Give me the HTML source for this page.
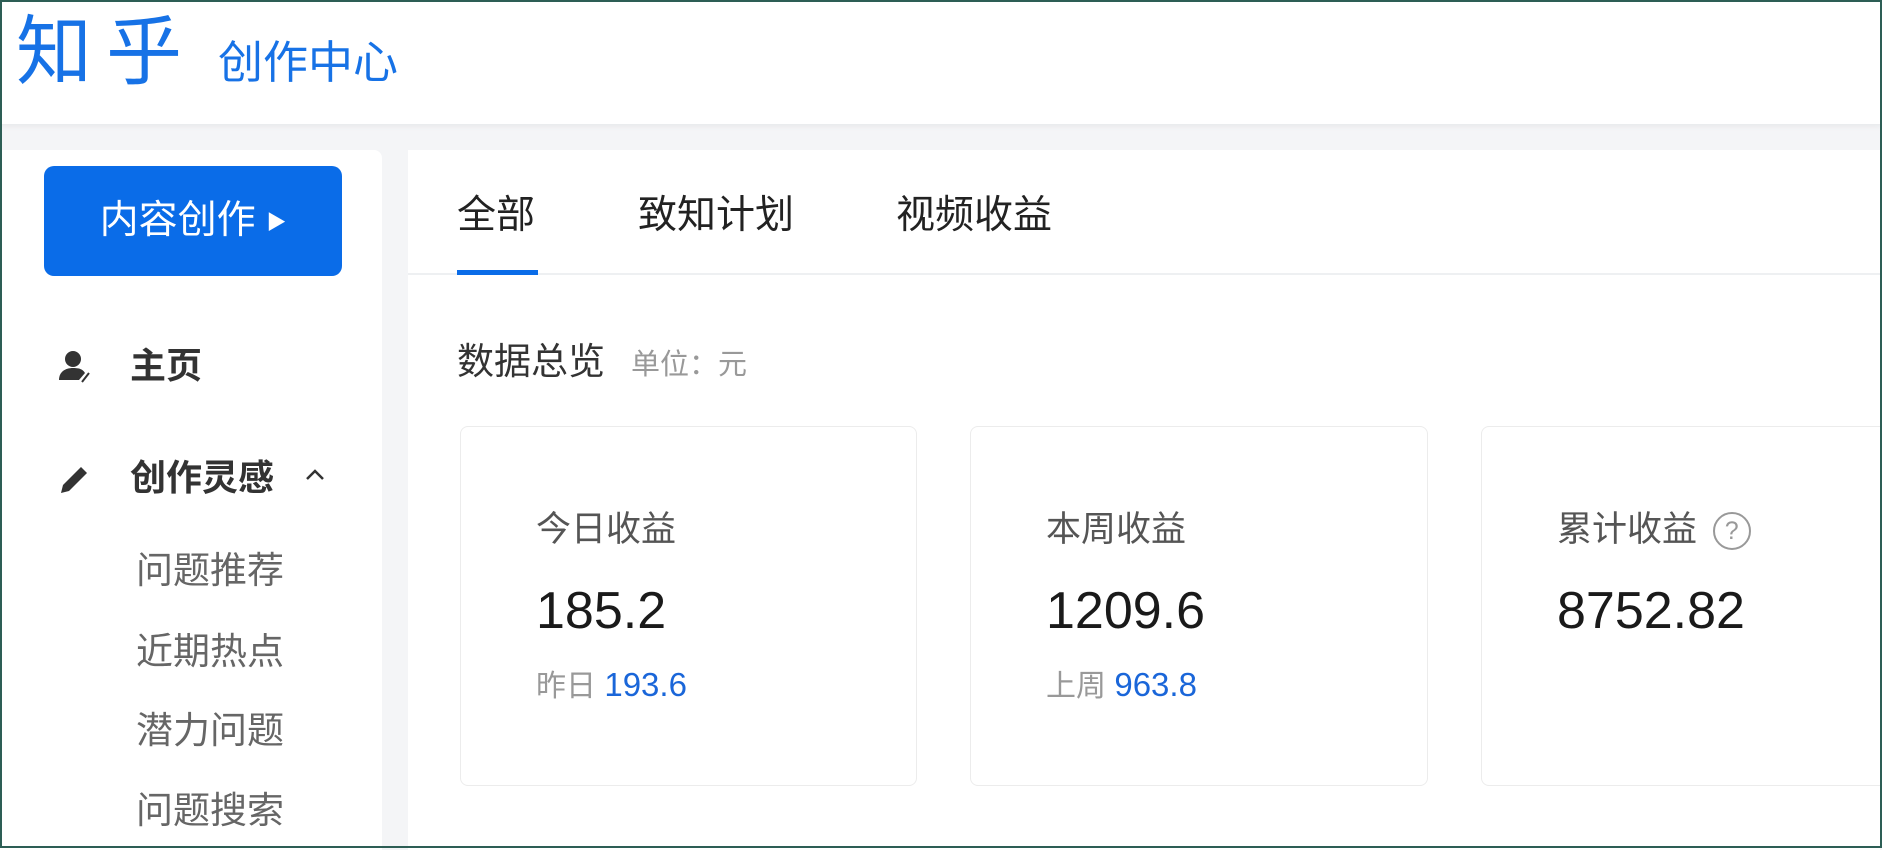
<!DOCTYPE html>
<html><head><meta charset="utf-8"><style>
*{margin:0;padding:0;box-sizing:border-box}
body{width:1882px;height:848px;overflow:hidden;background:#f4f5f7;font-family:"Liberation Sans","Noto Sans CJK SC",sans-serif;position:relative}
.frame{position:absolute;inset:0;border:2px solid #2d5e55;z-index:10;pointer-events:none}
.hdr{position:absolute;left:0;top:0;width:1882px;height:124px;background:#fff;box-shadow:0 2px 6px rgba(0,0,0,.06)}
.logo{position:absolute;left:16px;top:8px;font-size:76px;color:#1772e6;font-weight:normal;letter-spacing:14px;line-height:90px}
.sub{position:absolute;left:218px;top:36px;font-size:45px;color:#1772e6;line-height:54px}
.side{position:absolute;left:0;top:150px;width:382px;height:700px;background:#fff;border-radius:0 8px 0 0}
.btn{position:absolute;left:44px;top:166px;width:298px;height:110px;background:#0a6ce8;border-radius:10px;color:#fff;font-size:39px;line-height:110px;text-align:center}
.nav{position:absolute;font-size:36px;color:#333;font-weight:bold;line-height:44px}
.subi{position:absolute;left:136px;font-size:37px;color:#666;line-height:44px}
.main{position:absolute;left:408px;top:150px;width:1472px;height:700px;background:#fff}
.tab{position:absolute;top:193px;font-size:39px;color:#222;line-height:46px}
.card{position:absolute;top:426px;height:360px;border:1px solid #ececec;border-radius:8px;background:#fff}
.lbl{position:absolute;left:75px;top:82px;font-size:35px;color:#555;line-height:42px}
.val{position:absolute;left:75px;top:152px;font-size:52px;color:#1a1a1a;line-height:64px}
.cmp{position:absolute;left:75px;top:240px;font-size:30px;color:#999;line-height:36px}
.cmp span{color:#1a66d9;font-size:33px}
</style></head><body>
<div class="hdr"><div class="logo">知乎</div><div class="sub">创作中心</div></div>
<div class="side"></div>
<div class="btn">内容创作 <span style="font-size:20px;vertical-align:4px">▶</span></div>
<svg style="position:absolute;left:58px;top:350px" width="36" height="34" viewBox="0 0 36 34"><circle cx="15" cy="9" r="8" fill="#333"/><path d="M1 30c0-8 6-12 14-12s10 2 12 5l-6 7z" fill="#333"/><path d="M24 32l7-9" stroke="#333" stroke-width="2"/></svg>
<div class="nav" style="left:130px;top:344px">主页</div>
<svg style="position:absolute;left:58px;top:462px" width="34" height="34" viewBox="0 0 34 34"><path d="M3 31l2-8 18-18 6 6-18 18z" fill="#333"/></svg>
<div class="nav" style="left:130px;top:456px">创作灵感</div>
<svg style="position:absolute;left:304px;top:468px" width="22" height="14" viewBox="0 0 22 14"><path d="M3 11l8-8 8 8" stroke="#333" stroke-width="2.5" fill="none"/></svg>
<div class="subi" style="top:549px">问题推荐</div>
<div class="subi" style="top:630px">近期热点</div>
<div class="subi" style="top:709px">潜力问题</div>
<div class="subi" style="top:789px">问题搜索</div>
<div class="main"></div>
<div style="position:absolute;left:408px;top:273px;width:1472px;height:2px;background:#eef0f2"></div>
<div class="tab" style="left:457px">全部</div>
<div class="tab" style="left:638px">致知计划</div>
<div class="tab" style="left:896px">视频收益</div>
<div style="position:absolute;left:457px;top:270px;width:81px;height:5px;background:#0a6ce8"></div>
<div style="position:absolute;left:457px;top:340px;font-size:37px;color:#333;line-height:44px">数据总览<span style="font-size:29px;color:#999;margin-left:26px">单位：元</span></div>
<div class="card" style="left:460px;width:457px"><div class="lbl">今日收益</div><div class="val">185.2</div><div class="cmp">昨日 <span>193.6</span></div></div>
<div class="card" style="left:970px;width:458px"><div class="lbl">本周收益</div><div class="val">1209.6</div><div class="cmp">上周 <span>963.8</span></div></div>
<div class="card" style="left:1481px;width:420px"><div class="lbl">累计收益 <span style="display:inline-block;width:38px;height:38px;border:2px solid #999;border-radius:50%;font-size:25px;line-height:34px;text-align:center;color:#999;vertical-align:2px;margin-left:6px">?</span></div><div class="val">8752.82</div></div>
<div class="frame"></div>
</body></html>
